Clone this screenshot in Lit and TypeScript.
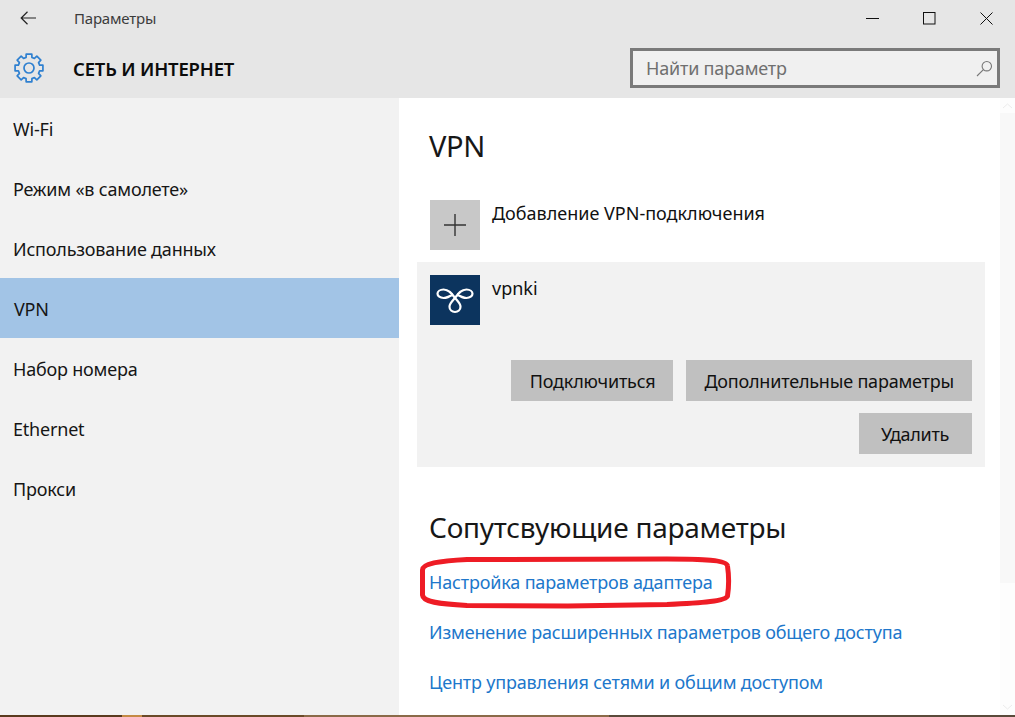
import { LitElement, html, css } from "lit";
import { customElement } from "lit/decorators.js";

const NAV = ["Wi-Fi", "Режим «в самолете»", "Использование данных", "VPN", "Набор номера", "Ethernet", "Прокси"];

function gearPath(): string {
  const cx = 15, cy = 15, teeth = 8, ro = 14.2, ri = 11;
  let d = "";
  for (let i = 0; i < teeth; i++) {
    const a = (i * 2 * Math.PI) / teeth - Math.PI / 2;
    const w = 0.2, g = 0.27;
    const pts: [number, number][] = [
      [ri, a - g], [ro, a - w], [ro, a + w], [ri, a + g],
    ];
    for (const [r, t] of pts) {
      d += `${d ? "L" : "M"}${(cx + r * Math.cos(t)).toFixed(2)} ${(cy + r * Math.sin(t)).toFixed(2)}`;
    }
  }
  return d + "Z";
}

@customElement("app-root")
export class AppRoot extends LitElement {
  static styles = css`
    :host {
      display: block;
      position: relative;
      width: 1015px;
      height: 717px;
      overflow: hidden;
      background: #fff;
      font-family: "Noto Sans", "Open Sans", sans-serif;
      color: #111;
    }
    .window { display: flex; flex-direction: column; height: 715px; }
    .header { height: 98px; flex: none; background: #e6e6e6; display: flex; flex-direction: column; }
    .titlebar { height: 36px; flex: none; display: flex; align-items: center; }
    .back { width: 19px; height: 14px; margin-left: 20px; display: block; }
    .title { margin-left: 35px; font-size: 15px; color: #3c3c3c; letter-spacing: -0.2px; }
    .controls { margin-left: auto; display: flex; align-items: center; margin-right: 22px; gap: 44px; }
    .controls svg { display: block; width: 13px; height: 13px; }
    .headrow { flex: 1; display: flex; align-items: flex-start; }
    .gear { width: 30px; height: 30px; margin: 17px 0 0 14px; flex: none; }
    .section { margin: 20px 0 0 29px; font-size: 18.5px; font-weight: 600; color: #0c0c0c; line-height: 26px; letter-spacing: -0.2px; }
    .search {
      margin: 12px 15px 0 auto;
      width: 370px;
      height: 40px;
      box-sizing: border-box;
      border: 3px solid #7a7a7a;
      background: #f0f0f0;
      display: flex;
      align-items: center;
      padding: 0 4px 0 13px;
      font-size: 18px;
      color: #6f6f6f;
      letter-spacing: -0.2px;
    }
    .search svg { margin-left: auto; width: 17px; height: 17px; }
    .body { flex: 1; display: flex; min-height: 0; }
    .nav { width: 399px; flex: none; background: #f2f2f2; }
    .nav-item {
      height: 60px;
      display: flex;
      align-items: center;
      padding: 2px 0 0 13px;
      box-sizing: border-box;
      font-size: 18px;
      color: #161616;
      letter-spacing: -0.2px;
    }
    .nav-item.active { background: #a2c4e6; padding-left: 14px; }
    .main { flex: 1; position: relative; display: flex; min-width: 0; }
    .content { flex: 1; padding: 28px 15px 0 18px; min-width: 0; }
    h1, h2 { font-weight: 400; margin: 0; color: #171717; }
    h1 { font-size: 29px; line-height: 40px; margin-left: 12px; letter-spacing: -0.3px; }
    .row { display: flex; align-items: flex-start; }
    .add { margin: 34px 0 0 13px; height: 50px; }
    .tile { width: 50px; height: 50px; flex: none; }
    .tile svg { display: block; width: 50px; height: 50px; }
    .tile.plus { background: #c8c8c8; }
    .tile.logo { background: #0c345e; }
    .label { margin-left: 12px; font-size: 18px; line-height: 26px; color: #111; }
    .card { margin-top: 12px; height: 205px; background: #f2f2f2; padding: 13px 13px 0 13px; box-sizing: border-box; }
    .actions { display: flex; justify-content: flex-end; gap: 13px; margin-top: 35px; }
    .actions.second { margin-top: 12px; }
    .btn {
      height: 41px;
      padding: 0 18px;
      background: #c0c0c0;
      display: flex;
      align-items: center;
      font-size: 18px;
      color: #111;
      letter-spacing: -0.2px;
    }
    .btn.connect { padding-left: 19px; }
    .btn.remove { padding: 0 23px 0 22px; letter-spacing: -0.3px; }
    h2 { margin: 40px 0 0 12px; font-size: 28px; line-height: 40px; letter-spacing: -0.25px; }
    .links { margin: 22px 0 0 12px; display: flex; flex-direction: column; gap: 24px; }
    .link { font-size: 18px; line-height: 26px; color: #2077cb; letter-spacing: -0.17px; }
    .scroll { width: 15px; flex: none; background: #fdfdfd; display: flex; flex-direction: column; }
    .thumb { margin-top: 15px; height: 470px; background: #f8f8f8; }
    .arrow { display: block; width: 15px; height: 10px; }
    .arrow.up { position: absolute; right: 0; top: 3px; }
    .arrow.down { position: absolute; right: 0; bottom: 3px; }
    .mark { position: absolute; left: 19px; top: 458px; width: 314px; height: 54px; pointer-events: none; }
    .strip {
      height: 2px;
      background: linear-gradient(90deg, #5a3a1e 0 12%, #c48a45 12% 14%, #6a4a28 14% 30%, #8a6a48 30% 60%, #5a4a3a 60% 100%);
    }
  `;

  render() {
    return html`
      <div class="window">
        <div class="header">
          <div class="titlebar">
            <svg class="back" viewBox="0 0 19 14" fill="none" stroke="#222" stroke-width="1.2">
              <path d="M1 7H16M7.5 .8 1.2 7l6.3 6.2" />
            </svg>
            <span class="title">Параметры</span>
            <div class="controls">
              <svg viewBox="0 0 13 13" fill="none" stroke="#111" stroke-width="1"><path d="M0 6.5H13" /></svg>
              <svg viewBox="0 0 13 13" fill="none" stroke="#111" stroke-width="1"><rect x=".5" y=".5" width="11.5" height="11.5" /></svg>
              <svg viewBox="0 0 13 13" fill="none" stroke="#111" stroke-width="1"><path d="M.5 .5 12.5 12.5M12.5 .5 .5 12.5" /></svg>
            </div>
          </div>
          <div class="headrow">
            <svg class="gear" viewBox="0 0 30 30" fill="none" stroke="#2f80d0" stroke-width="1.7" stroke-linejoin="round">
              <path d=${gearPath()} />
              <circle cx="15" cy="15" r="5" />
            </svg>
            <div class="section">СЕТЬ И ИНТЕРНЕТ</div>
            <div class="search">
              <span>Найти параметр</span>
              <svg viewBox="0 0 17 17" fill="none" stroke="#777" stroke-width="1.1"><circle cx="10.8" cy="6.2" r="4.7" /><path d="M7.4 9.6 1 16" /></svg>
            </div>
          </div>
        </div>
        <div class="body">
          <nav class="nav">
            ${NAV.map((n) => html`<div class="nav-item ${n === "VPN" ? "active" : ""}">${n}</div>`)}
          </nav>
          <main class="main">
            <div class="content">
              <h1>VPN</h1>
              <div class="row add">
                <div class="tile plus">
                  <svg viewBox="0 0 50 50" fill="none" stroke="#333" stroke-width="1.4"><path d="M25 14V36M14 25H36" /></svg>
                </div>
                <span class="label">Добавление VPN-подключения</span>
              </div>
              <div class="card">
                <div class="row">
                  <div class="tile logo">
                    <svg viewBox="0 0 50 50" fill="none" stroke="#fff" stroke-width="2.2" stroke-linejoin="round">
                      <path d="M25 23C22 19 19 14.5 13.5 14.5C10 14.5 7.5 16.5 7.5 18.8C7.5 21 10 23 13.5 23C17 23 20.5 21 23.3 19" />
                      <path d="M25 23C28 19 31 14.5 36.5 14.5C40 14.5 42.5 16.5 42.5 18.8C42.5 21 40 23 36.5 23C33 23 29.5 21 26.7 19" />
                      <path d="M25 23C28 26.5 30.5 28.5 30.5 31.8C30.5 34.8 28 37 25 37C22 37 19.5 34.8 19.5 31.8C19.5 28.5 22 26.5 25 23Z" />
                    </svg>
                  </div>
                  <span class="label">vpnki</span>
                </div>
                <div class="actions">
                  <div class="btn connect">Подключиться</div>
                  <div class="btn">Дополнительные параметры</div>
                </div>
                <div class="actions second">
                  <div class="btn remove">Удалить</div>
                </div>
              </div>
              <h2>Сопутсвующие параметры</h2>
              <div class="links">
                <span class="link">Настройка параметров адаптера</span>
                <span class="link">Изменение расширенных параметров общего доступа</span>
                <span class="link">Центр управления сетями и общим доступом</span>
              </div>
            </div>
            <div class="scroll"><div class="thumb"></div></div>
            <svg class="arrow up" viewBox="0 0 15 10" fill="none" stroke="#ececec" stroke-width="1"><path d="M3 7 7.5 3 12 7" /></svg>
            <svg class="arrow down" viewBox="0 0 15 10" fill="none" stroke="#ececec" stroke-width="1"><path d="M3 3 7.5 7 12 3" /></svg>
            <svg class="mark" viewBox="0 0 314 54" fill="none" stroke="#ee1c25" stroke-width="5" stroke-linejoin="round">
              <path d="M4.5 14C4.5 8 20 5 49 3.5L249 3C285 3 309 4 309.5 10C311 20 311 30 309.5 40C308 45 285 47 249 48.5L150 50L49 49.5C20 48 5 46 4.5 39Z" />
            </svg>
          </main>
        </div>
      </div>
      <div class="strip"></div>
    `;
  }
}
